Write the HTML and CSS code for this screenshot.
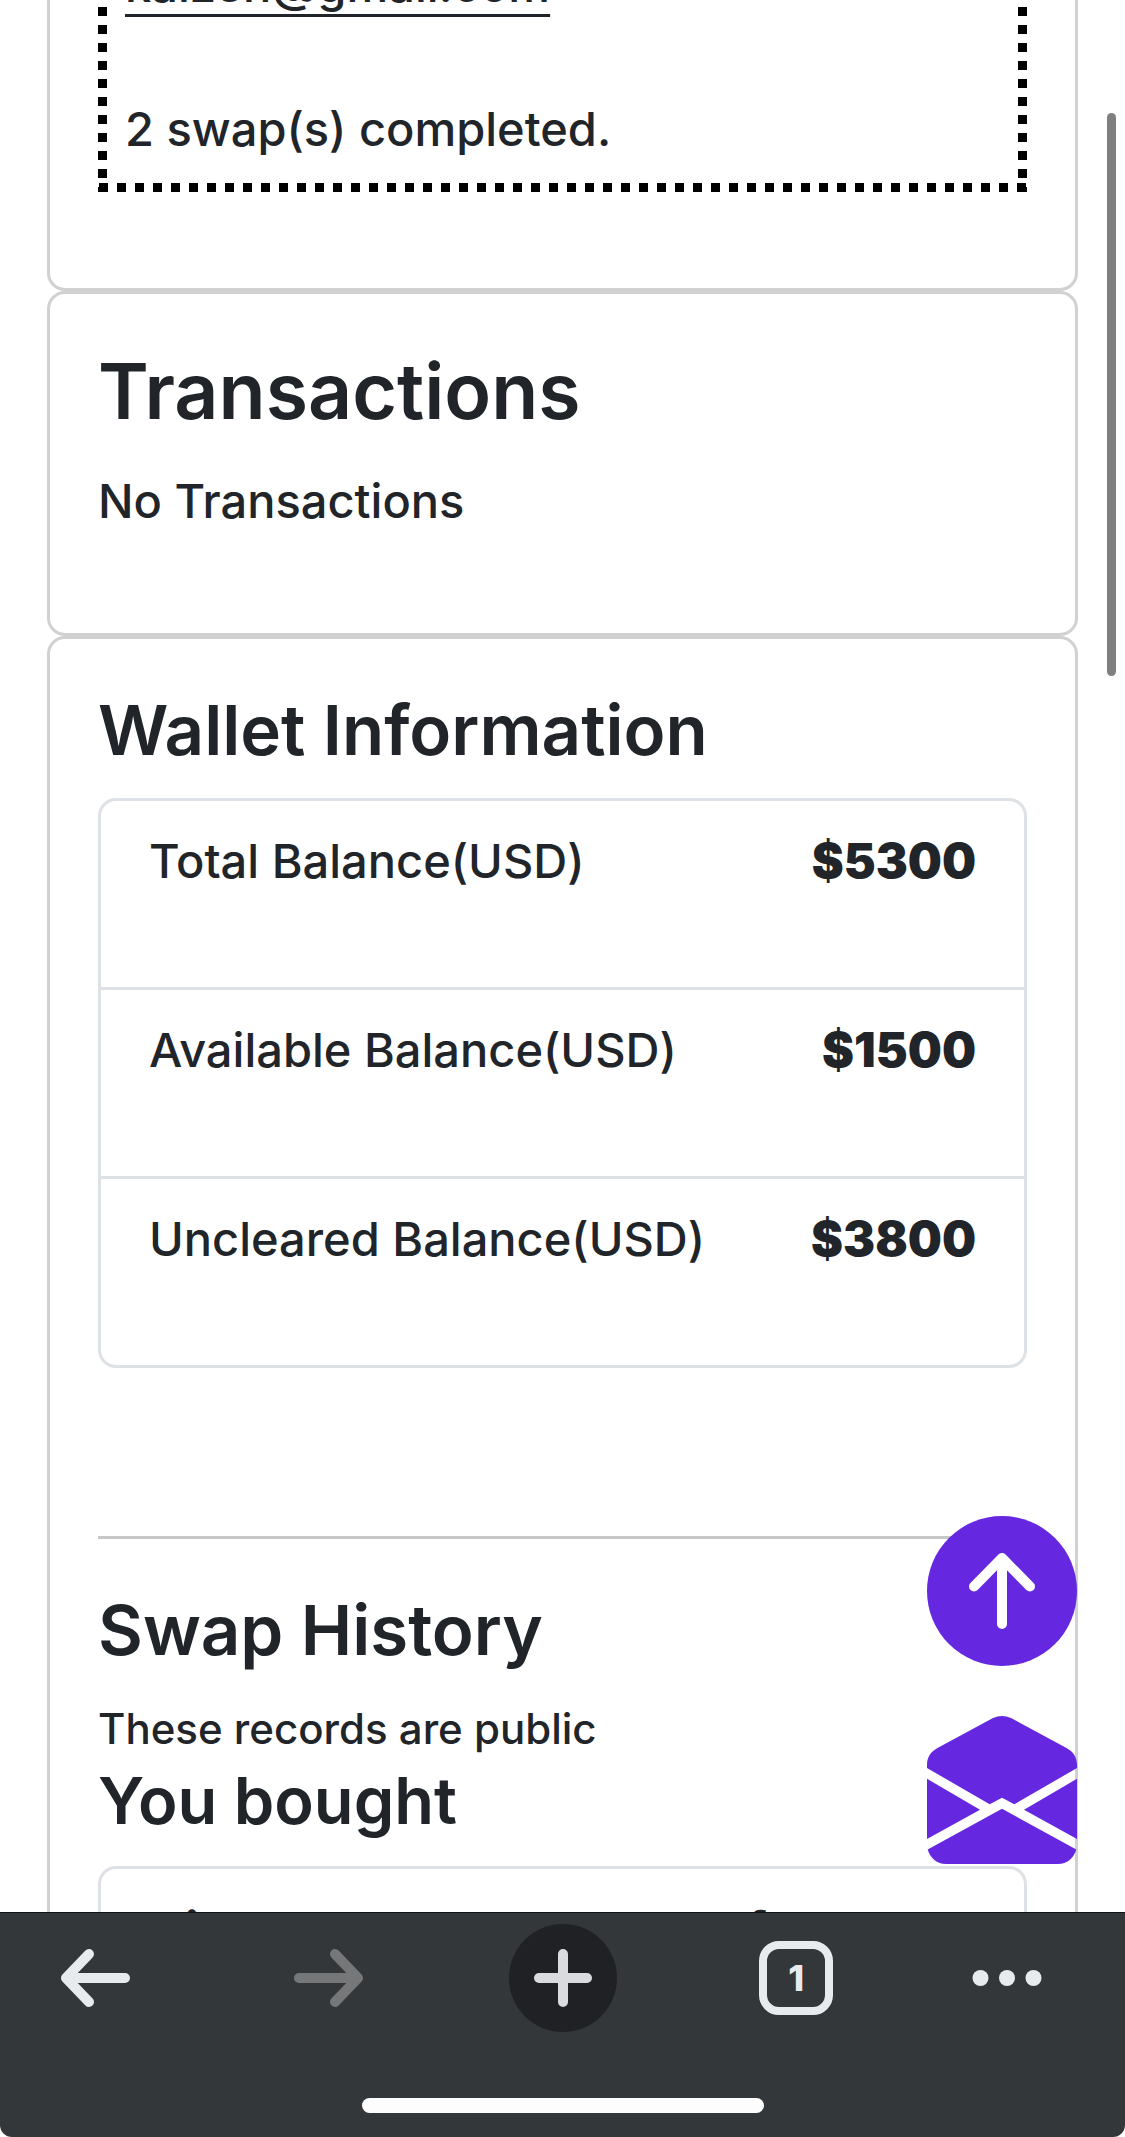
FILE: index.html
```html
<!DOCTYPE html>
<html lang="en">
<head>
<meta charset="utf-8">
<meta name="viewport" content="width=device-width, initial-scale=1">
<title>Profile</title>
<link rel="stylesheet" href="styles.css">
</head>
<body>
<main class="page">
  <section class="card card-profile">
    <div class="summary">
      <a class="summary-email" href="mailto:kaizen@gmail.com">kaizen@gmail.com</a>
      <p class="text">2 swap(s) completed.</p>
    </div>
  </section>

  <section class="card">
    <h1 class="title">Transactions</h1>
    <p class="text">No Transactions</p>
  </section>

  <section class="card">
    <h2 class="heading">Wallet Information</h2>
    <dl class="list">
      <div class="list-row"><dt>Total Balance(USD)</dt><dd class="amount">$5300</dd></div>
      <div class="list-row"><dt>Available Balance(USD)</dt><dd class="amount">$1500</dd></div>
      <div class="list-row"><dt>Uncleared Balance(USD)</dt><dd class="amount">$3800</dd></div>
    </dl>
    <hr class="divider">
    <h2 class="heading">Swap History</h2>
    <p class="note">These records are public</p>
    <h3 class="subheading">You bought</h3>
    <ul class="list">
      <li class="list-row item-name">Vignettes and cameo box for</li>
    </ul>
  </section>

  <div class="scroll-thumb"></div>

  <div class="floating">
    <button class="fab" type="button" aria-label="Back to top">
      <svg width="150" height="150" viewBox="0 0 150 150" fill="none">
        <circle cx="75" cy="75" r="75" fill="#6528e0"/>
        <path d="M75 108V42M47 70.500L75 42L103 70.500" stroke="#fff" stroke-width="10" stroke-linecap="round" stroke-linejoin="round"/>
      </svg>
    </button>
    <button class="fab" type="button" aria-label="Contact us">
      <svg width="150" height="148" viewBox="0 0 150 148" fill="#6528e0">
        <path d="M0 52L62.700 88.300L75 81.700L87.300 88.300L150 52V49C150 41 146 35.500 139.500 32L84 2Q75-2 66 2L10.500 32C4 35.500 0 41 0 49Z"/>
        <path d="M0 62.700L53 93.700L0 123Z"/>
        <path d="M150 62.700L97 93.700L150 123Z"/>
        <path d="M.7 133.500L75 92.700L149.300 133.500C147 142 140 148 131 148H19C10 148 3 142 .7 133.500Z"/>
      </svg>
    </button>
  </div>
</main>

<nav class="toolbar" aria-label="Browser">
  <div class="toolbar-buttons">
    <button class="tool" type="button" aria-label="Back">
      <svg width="70" height="60" viewBox="0 0 70 60" fill="none" stroke="#e8ebee" stroke-width="10" stroke-linecap="round" stroke-linejoin="round"><path d="M65 30H6M29 6L6 30L29 54"/></svg>
    </button>
    <button class="tool" type="button" aria-label="Forward" disabled>
      <svg width="70" height="60" viewBox="0 0 70 60" fill="none" stroke="#767779" stroke-width="10" stroke-linecap="round" stroke-linejoin="round"><path d="M5 30H64M41 6L64 30L41 54"/></svg>
    </button>
    <button class="tool tool-new" type="button" aria-label="New tab">
      <svg width="60" height="60" viewBox="0 0 60 60" fill="none" stroke="#dadbdf" stroke-width="10" stroke-linecap="round"><path d="M30 6V54M6 30H54"/></svg>
    </button>
    <button class="tool" type="button" aria-label="Open tabs: 1"><span class="tab-count">1</span></button>
    <button class="tool tool-more" type="button" aria-label="More">
      <svg width="70" height="16" viewBox="0 0 70 16" fill="#e8ebee"><circle cx="8.500" cy="8" r="8"/><circle cx="35" cy="8" r="8"/><circle cx="61.500" cy="8" r="8"/></svg>
    </button>
  </div>
  <div class="home-bar"></div>
</nav>
</body>
</html>
```

FILE: styles.css
```css
* {
  box-sizing: border-box;
  margin: 0;
  padding: 0;
}

body {
  display: flex;
  flex-direction: column;
  height: 100vh;
  background: #fff;
  color: #212529;
  font-family: Inter, "Liberation Sans", sans-serif;
  font-size: 47px;
  font-weight: 500;
  line-height: 72px;
}

button {
  border: 0;
  background: none;
  font: inherit;
}

svg {
  display: block;
  flex: none;
}

.page {
  position: relative;
  flex: 1;
  min-height: 0;
  overflow: hidden;
  padding: 0 47px;
}

.card {
  padding: 48px 48px 96px;
  border: 3px solid #d1d1d1;
  border-radius: 18px;
}

/* The page is scrolled: the top of the first card is above the view. */
.card-profile {
  margin-top: -129px;
}

/* Square dots on the left, right and bottom edges. */
.summary {
  display: flex;
  flex-direction: column;
  align-items: flex-start;
  gap: 72px;
  padding: 27px;
  background-image:
    linear-gradient(to top, #000 9px, transparent 9px),
    linear-gradient(to top, #000 9px, transparent 9px),
    linear-gradient(to right, #000 9px, transparent 9px);
  background-size: 9px 18px, 9px 18px, 18px 9px;
  background-position: left bottom 14px, right bottom 14px, left 1px bottom;
  background-repeat: repeat-y, repeat-y, repeat-x;
}

.summary-email {
  color: inherit;
  text-decoration: underline 3px;
  text-decoration-skip-ink: none;
  text-underline-offset: 12px;
}

.title {
  margin-bottom: 24px;
  font-size: 77px;
  font-weight: 600;
  line-height: 99px;
}

.heading {
  margin-bottom: 24px;
  font-size: 69px;
  font-weight: 600;
  line-height: 87px;
}

.subheading {
  margin-bottom: 24px;
  font-size: 65px;
  font-weight: 600;
  line-height: 82px;
}

.note {
  font-size: 42px;
  line-height: 62px;
}

.list {
  border: 3px solid #dee2e6;
  border-radius: 18px;
  list-style: none;
}

.list-row {
  display: flex;
  justify-content: space-between;
  padding: 24px 48px 90px;
}

.list-row + .list-row {
  border-top: 3px solid #dee2e6;
}

.amount {
  font-size: 48px;
  font-weight: 900;
}

.item-name {
  font-weight: 800;
}

.divider {
  height: 3px;
  margin: 168px 0 48px;
  border: 0;
  background: #c7c7c7;
}

.scroll-thumb {
  position: absolute;
  top: 113px;
  right: 9px;
  width: 9px;
  height: 563px;
  border-radius: 5px;
  background: #808080;
}

.floating {
  position: absolute;
  right: 48px;
  bottom: 48px;
  display: flex;
  flex-direction: column;
  gap: 50px;
}

.toolbar {
  display: flex;
  flex-direction: column;
  align-items: center;
  gap: 66px;
  padding: 11px 0 24px;
  border-top: 1px solid #121314;
  border-radius: 0 0 12px 12px;
  background: #33373a;
}

.toolbar-buttons {
  display: flex;
  align-items: center;
  justify-content: space-between;
  align-self: stretch;
  padding: 0 87px 0 41px;
}

.tool {
  display: flex;
  align-items: center;
  justify-content: center;
  width: 108px;
  height: 108px;
}

.tool-new {
  border-radius: 50%;
  background: #202124;
}

.tool-more {
  width: 62px;
}

.tab-count {
  width: 74px;
  height: 74px;
  border: 8px solid #e8ebee;
  border-radius: 20px;
  color: #e8ebee;
  font-size: 36px;
  font-weight: 800;
  line-height: 58px;
  text-align: center;
}

.home-bar {
  width: 402px;
  height: 15px;
  border-radius: 8px;
  background: #fdfdfd;
}
```
